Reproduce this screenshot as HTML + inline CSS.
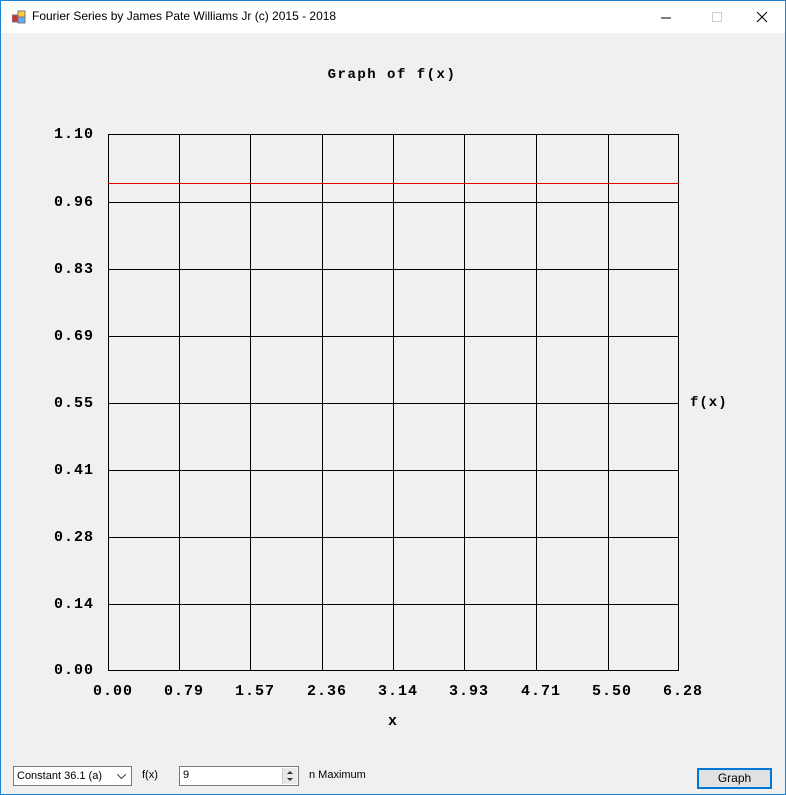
<!DOCTYPE html>
<html><head><style>
html,body{margin:0;padding:0;}
body{width:786px;height:795px;background:#f0f0f0;position:relative;overflow:hidden;font-family:"Liberation Sans",sans-serif;}
.frame{position:absolute;left:0;top:0;width:784px;height:793px;border:1px solid #1883d7;}
.tb{position:absolute;left:1px;top:1px;width:784px;height:32px;background:#fff;}
.tb .t{position:absolute;left:31px;top:8px;font-size:12px;color:#000;}
.ctl{position:absolute;font-size:11px;}
</style></head><body>
<div class="frame"></div>
<div class="tb">
<svg style="position:absolute;left:11px;top:9px" width="14" height="14"><rect x="0" y="5" width="6" height="7" fill="#c33" stroke="#777" stroke-width="1"/><rect x="6" y="1" width="7" height="6" fill="#fc3" stroke="#777"/><rect x="6" y="7" width="7" height="6" fill="#6af" stroke="#777"/></svg>
<div class="t">Fourier Series by James Pate Williams Jr (c) 2015 - 2018</div>
<svg style="position:absolute;left:660px;top:10px" width="120" height="14"><line x1="0" y1="7" x2="10" y2="7" stroke="#000"/><rect x="51.5" y="1.5" width="9" height="9" fill="none" stroke="#ccc"/><line x1="96" y1="1" x2="106" y2="11" stroke="#000"/><line x1="106" y1="1" x2="96" y2="11" stroke="#000"/></svg>
</div>
<svg style="position:absolute;left:0;top:0" width="786" height="795" font-family="Liberation Mono,monospace" font-weight="bold" font-size="15">
<text x="392" y="78" text-anchor="middle" font-size="14" letter-spacing="1.5">Graph of f(x)</text>
<g stroke="#000" stroke-width="1">
<line x1="108.5" y1="134" x2="108.5" y2="671"/><line x1="179.5" y1="134" x2="179.5" y2="671"/><line x1="250.5" y1="134" x2="250.5" y2="671"/><line x1="322.5" y1="134" x2="322.5" y2="671"/><line x1="393.5" y1="134" x2="393.5" y2="671"/><line x1="464.5" y1="134" x2="464.5" y2="671"/><line x1="536.5" y1="134" x2="536.5" y2="671"/><line x1="608.5" y1="134" x2="608.5" y2="671"/><line x1="678.5" y1="134" x2="678.5" y2="671"/>
<line x1="108" y1="134.5" x2="679" y2="134.5"/><line x1="108" y1="202.5" x2="679" y2="202.5"/><line x1="108" y1="269.5" x2="679" y2="269.5"/><line x1="108" y1="336.5" x2="679" y2="336.5"/><line x1="108" y1="403.5" x2="679" y2="403.5"/><line x1="108" y1="470.5" x2="679" y2="470.5"/><line x1="108" y1="537.5" x2="679" y2="537.5"/><line x1="108" y1="604.5" x2="679" y2="604.5"/><line x1="108" y1="670.5" x2="679" y2="670.5"/>
</g>
<rect x="108" y="183" width="571" height="1" fill="#e00000"/>
<g text-anchor="end" letter-spacing="1">
<text x="94" y="138">1.10</text><text x="94" y="206">0.96</text><text x="94" y="273">0.83</text><text x="94" y="340">0.69</text><text x="94" y="407">0.55</text><text x="94" y="474">0.41</text><text x="94" y="541">0.28</text><text x="94" y="608">0.14</text><text x="94" y="674">0.00</text>
</g>
<g text-anchor="middle" letter-spacing="1">
<text x="113" y="695">0.00</text><text x="184" y="695">0.79</text><text x="255" y="695">1.57</text><text x="327" y="695">2.36</text><text x="398" y="695">3.14</text><text x="469" y="695">3.93</text><text x="541" y="695">4.71</text><text x="612" y="695">5.50</text><text x="683" y="695">6.28</text>
<text x="393" y="725">x</text>
</g>
<text x="690" y="406" letter-spacing="1" font-size="14">f(x)</text>
</svg>
<div class="ctl" style="left:13px;top:766px;width:119px;height:20px;background:#fff;border:1px solid #7a7a7a;box-sizing:border-box;padding:3px 0 0 3px;">Constant 36.1 (a)<svg style="position:absolute;right:5px;top:7px" width="9" height="6"><polyline points="0,0 4.5,4.5 9,0" fill="none" stroke="#444"/></svg></div>
<div class="ctl" style="left:142px;top:769px;">f(x)</div>
<div class="ctl" style="left:179px;top:766px;width:120px;height:20px;background:#fff;border:1px solid #7a7a7a;box-sizing:border-box;padding:2px 0 0 3px;">9<div style="position:absolute;right:1px;top:1px;width:14px;height:16px;background:#e8e8e8;border-left:1px solid #ccc;"><svg width="14" height="16"><polygon points="4,6 10,6 7,3" fill="#333"/><polygon points="4,10 10,10 7,13" fill="#333"/></svg></div></div>
<div class="ctl" style="left:309px;top:769px;">n Maximum</div>
<div class="ctl" style="left:697px;top:768px;width:75px;height:21px;background:#e1e1e1;border:2px solid #0078d7;box-sizing:border-box;text-align:center;line-height:17px;font-size:12px;">Graph</div>
</body></html>
